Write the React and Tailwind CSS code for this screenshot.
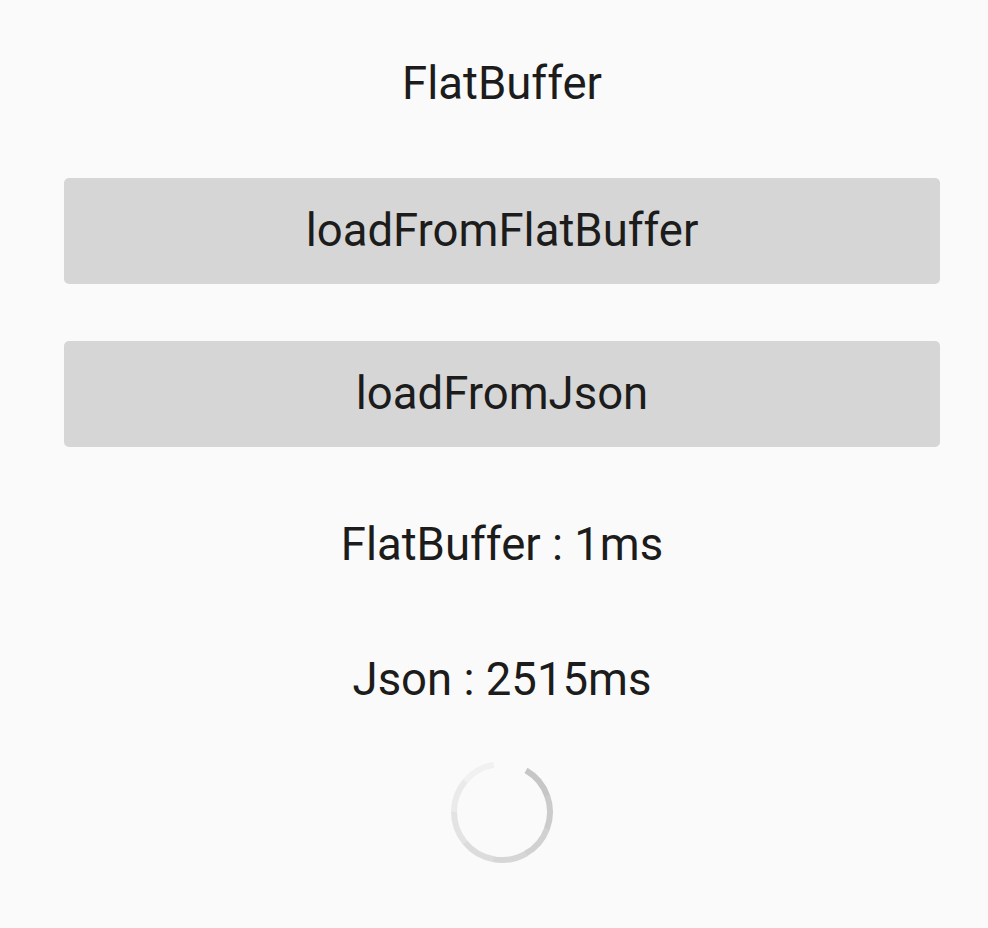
import React from "react";

// arc segments fading from the head (1 o'clock) clockwise round to the top
const SHADES = ["#c6c6c6", "#cbcbcb", "#d1d1d1", "#d6d6d6", "#dcdcdc", "#e3e3e3", "#eaeaea", "#f1f1f1"];

function Spinner() {
  const cx = 56;
  const cy = 56;
  const r = 48;
  const start = -60;
  const sweep = 320;
  const step = sweep / SHADES.length;
  const pt = (deg) => {
    const a = (deg * Math.PI) / 180;
    return `${(cx + r * Math.cos(a)).toFixed(2)} ${(cy + r * Math.sin(a)).toFixed(2)}`;
  };
  return (
    <svg width="112" height="112" viewBox="0 0 112 112" className="blur-[0.6px]">
      {SHADES.map((c, i) => {
        const a0 = start + i * step;
        const a1 = a0 + step + (i < SHADES.length - 1 ? 1 : 0);
        return (
          <path
            key={i}
            d={`M ${pt(a0)} A ${r} ${r} 0 0 1 ${pt(a1)}`}
            fill="none"
            stroke={c}
            strokeWidth="6"
          />
        );
      })}
    </svg>
  );
}

export default function App() {
  return (
    <div
      className="w-[988px] h-[928px] bg-[#fafafa] text-[#1c1c1c] flex flex-col items-center pl-4"
      style={{ fontFamily: "Roboto, 'Liberation Sans', sans-serif" }}
    >
      <div className="mt-[56px] h-[56px] flex items-center text-[45.5px] leading-none">FlatBuffer</div>
      <div className="mt-[66px] flex flex-col gap-[57px] w-[876px]">
        <button className="h-[106px] rounded-[5px] bg-[#d6d6d6] text-[45.5px] leading-none text-[#1c1c1c]">
          loadFromFlatBuffer
        </button>
        <button className="h-[106px] rounded-[5px] bg-[#d6d6d6] text-[45.5px] leading-none text-[#1c1c1c]">
          loadFromJson
        </button>
      </div>
      <div className="mt-[70px] h-[56px] flex items-center text-[45.5px] leading-none">FlatBuffer : 1ms</div>
      <div className="mt-[79px] h-[56px] flex items-center text-[45.5px] leading-none">Json : 2515ms</div>
      <div className="mt-[48px]">
        <Spinner />
      </div>
    </div>
  );
}
